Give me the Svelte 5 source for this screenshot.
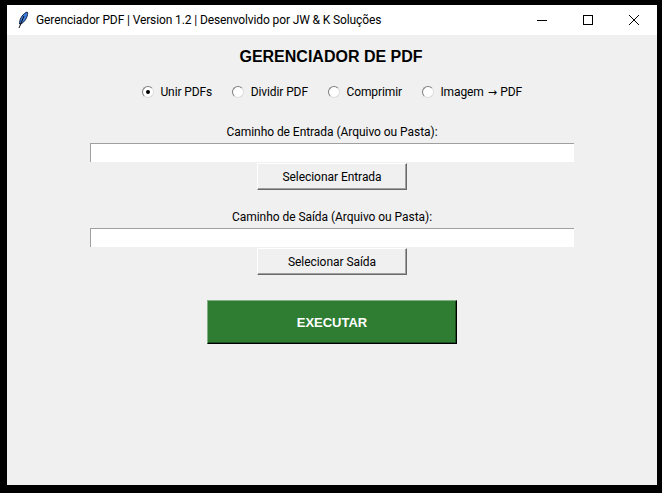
<script>
  const modes = [
    { name: "Unir PDFs" },
    { name: "Dividir PDF" },
    { name: "Comprimir" },
    { name: "Imagem", to: "PDF" },
  ]
  let mode = $state("Unir PDFs")
  const fields = [
    { label: "Caminho de Entrada (Arquivo ou Pasta):", action: "Selecionar Entrada" },
    { label: "Caminho de Saída (Arquivo ou Pasta):", action: "Selecionar Saída" },
  ]
</script>

<div class="window">
  <header class="titlebar">
    <svg class="feather" width="16" height="20" viewBox="0 0 16 20">
      <path d="M4.5 14 C4.5 10 6.5 5 11 2.5 C12.5 1.5 13 2.5 12.5 4.5 C12 8 9.5 12 6 14 Z" fill="#3d7fe0" stroke="#14213d" stroke-width="1" />
      <path d="M4 18 L9 6" stroke="#0c0c14" stroke-width="1" fill="none" />
    </svg>
    <span class="title">Gerenciador PDF | Version 1.2 | Desenvolvido por JW &amp; K Soluções</span>
    <div class="controls">
      <span class="ctl"><svg width="12" height="12" viewBox="0 0 12 12"><path d="M1 6.5H11" stroke="#000" /></svg></span>
      <span class="ctl"><svg width="12" height="12" viewBox="0 0 12 12"><rect x="1.5" y="1.5" width="9" height="9" fill="none" stroke="#000" /></svg></span>
      <span class="ctl"><svg width="12" height="12" viewBox="0 0 12 12"><path d="M1 1L11 11M11 1L1 11" stroke="#000" /></svg></span>
    </div>
  </header>

  <main class="content">
    <h1>GERENCIADOR DE PDF</h1>

    <div class="modes">
      {#each modes as m}
        <button class="mode" onclick={() => (mode = m.name)}>
          <span class="dot" class:on={mode === m.name}></span>
          <span>{m.name}{#if m.to}&nbsp;<span class="arrow">→</span>&nbsp;{m.to}{/if}</span>
        </button>
      {/each}
    </div>

    {#each fields as f}
      <section class="field">
        <label for={f.action}>{f.label}</label>
        <input id={f.action} type="text" />
        <button class="pick">{f.action}</button>
      </section>
    {/each}

    <button class="run">EXECUTAR</button>
  </main>
</div>

<style>
  :global(body) {
    margin: 0;
    background: #000;
  }
  .window {
    width: 650px;
    height: 480px;
    margin: 5px 0 0 7px;
    background: #f0f0f0;
    display: flex;
    flex-direction: column;
    font-family: Roboto, "Liberation Sans", sans-serif;
    font-size: 12px;
    color: #000;
  }
  .titlebar {
    height: 30px;
    background: #fff;
    display: flex;
    align-items: center;
    flex-shrink: 0;
  }
  .feather {
    margin-left: 8px;
  }
  .title {
    margin-left: 5px;
    letter-spacing: -0.12px;
  }
  .controls {
    margin-left: auto;
    display: flex;
  }
  .ctl {
    width: 46px;
    height: 30px;
    display: flex;
    align-items: center;
    justify-content: center;
  }
  .content {
    display: flex;
    flex-direction: column;
    align-items: center;
  }
  h1 {
    margin: 12px 2px 0 0;
    font: bold 16px/20px "Liberation Sans", Arial, sans-serif;
  }
  .modes {
    display: flex;
    gap: 20px;
    margin-top: 15px;
    height: 20px;
    letter-spacing: -0.1px;
  }
  .mode {
    display: flex;
    align-items: center;
    gap: 6.5px;
    padding: 0;
    border: 0;
    background: none;
    font: inherit;
    letter-spacing: inherit;
    color: inherit;
  }
  .arrow {
    font-family: "DejaVu Sans", sans-serif;
    font-size: 11px;
    letter-spacing: -0.5px;
    margin: 0 1px;
  }
  .dot {
    width: 12px;
    height: 12px;
    box-sizing: border-box;
    border-radius: 50%;
    background: #fff;
    border: 1px solid;
    border-color: #7d7d7d #dcdcdc #dcdcdc #7d7d7d;
    display: flex;
    align-items: center;
    justify-content: center;
  }
  .dot.on::after {
    content: "";
    width: 4px;
    height: 4px;
    border-radius: 50%;
    background: #000;
  }
  .field {
    display: flex;
    flex-direction: column;
    align-items: center;
    margin-top: 18px;
  }
  .modes + .field {
    margin-top: 21px;
  }
  .field label {
    line-height: 18px;
    height: 18px;
    margin-bottom: 2px;
    letter-spacing: -0.05px;
  }
  .field input {
    width: 484px;
    height: 19px;
    box-sizing: border-box;
    background: #fff;
    border: 0;
    border-top: 1px solid #a0a0a0;
    border-left: 1px solid #a0a0a0;
    padding: 0;
    outline: none;
  }
  .pick {
    width: 150px;
    height: 27px;
    margin-top: 1px;
    box-sizing: border-box;
    background: #f0f0f0;
    border: 1px solid;
    border-color: #fff #696969 #696969 #fff;
    box-shadow: inset -1px -1px 0 #a0a0a0;
    font: inherit;
    letter-spacing: -0.05px;
    color: inherit;
  }
  .run {
    width: 250px;
    height: 44px;
    margin-top: 25px;
    box-sizing: border-box;
    background: #2e7d32;
    border: 1px solid;
    border-color: #82b084 #000 #000 #82b084;
    box-shadow: inset -1px -1px 0 #1c4d1f;
    font: bold 13px "Liberation Sans", Arial, sans-serif;
    color: #fff;
  }
</style>
